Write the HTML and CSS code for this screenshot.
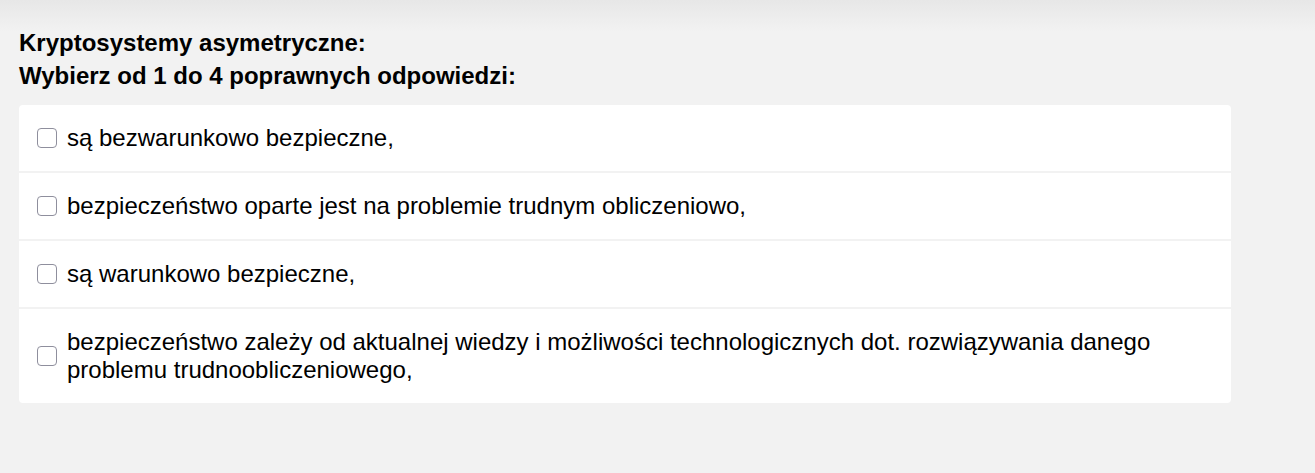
FILE: index.html
```html
<!DOCTYPE html>
<html lang="pl">
<head>
<meta charset="utf-8">
<title>Kryptosystemy asymetryczne</title>
<link rel="stylesheet" href="styles.css">
</head>
<body>
<main class="quiz">
  <h1 class="question">Kryptosystemy asymetryczne:</h1>
  <p class="hint">Wybierz od 1 do 4 poprawnych odpowiedzi:</p>
  <div class="answers">
    <label class="answer">
      <input type="checkbox" class="box">
      <span class="text">są bezwarunkowo bezpieczne,</span>
    </label>
    <label class="answer">
      <input type="checkbox" class="box">
      <span class="text">bezpieczeństwo oparte jest na problemie trudnym obliczeniowo,</span>
    </label>
    <label class="answer">
      <input type="checkbox" class="box">
      <span class="text">są warunkowo bezpieczne,</span>
    </label>
    <label class="answer">
      <input type="checkbox" class="box">
      <span class="text">bezpieczeństwo zależy od aktualnej wiedzy i możliwości technologicznych dot. rozwiązywania danego problemu trudnoobliczeniowego,</span>
    </label>
  </div>
</main>
</body>
</html>
```

FILE: styles.css
```css
html, body {
  margin: 0;
  padding: 0;
}
body {
  min-height: 473px;
  background: linear-gradient(#e7e7e7 0, #f2f2f2 32px, #f2f2f2 100%);
  font-family: "Liberation Sans", Arial, sans-serif;
  color: #000;
}
.quiz {
  padding: 26px 0 0 19px;
  width: 1212px;
}
.question,
.hint {
  margin: 0;
  font-size: 24px;
  font-weight: bold;
  line-height: 33px;
}
.hint {
  margin-bottom: 13px;
}
.answers {
  display: flex;
  flex-direction: column;
  gap: 2px;
  border-radius: 4px;
  overflow: hidden;
}
.answer {
  display: flex;
  align-items: center;
  gap: 10px;
  background: #fff;
  padding: 19px 18px;
  font-size: 24px;
  line-height: 28px;
  cursor: pointer;
}
.box {
  appearance: none;
  -webkit-appearance: none;
  flex: none;
  width: 20px;
  height: 20px;
  margin: 0;
  border: 1px solid #8f8f9d;
  border-radius: 4px;
  background: #fff;
  box-sizing: border-box;
}
.text {
  flex: 1;
}
```
